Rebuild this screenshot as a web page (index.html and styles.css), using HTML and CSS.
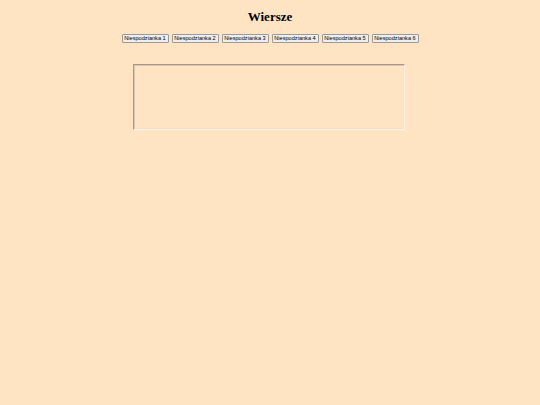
FILE: index.html
```html
<!DOCTYPE html>
<html lang="pl">
<head>
<meta charset="utf-8">
<title>Wiersze</title>
<link rel="stylesheet" href="styles.css">
</head>
<body>
<h3 class="title">Wiersze</h3>
<div class="buttons">
  <button class="btn">Niespodzianka 1</button>
  <button class="btn">Niespodzianka 2</button>
  <button class="btn">Niespodzianka 3</button>
  <button class="btn">Niespodzianka 4</button>
  <button class="btn">Niespodzianka 5</button>
  <button class="btn">Niespodzianka 6</button>
</div>
<div class="frame"></div>
</body>
</html>
```
FILE: styles.css
```css
html, body {
  margin: 0;
  padding: 0;
  background: #ffe4c4;
}
body {
  font-family: "Liberation Serif", serif;
}
.title {
  margin: 0;
  padding-top: 9px;
  font-size: 13px;
  line-height: 15px;
  font-weight: bold;
  text-align: center;
  color: #000;
}
.buttons {
  display: flex;
  justify-content: center;
  gap: 3px;
  margin-top: 10px;
}
.btn {
  font-family: "Liberation Sans", Arial, sans-serif;
  font-size: 5.6px;
  line-height: 7px;
  height: 9px;
  width: 47px;
  padding: 0;
  margin: 0;
  background: #eeeeee;
  color: #000;
  border: 1px solid #9a9a9a;
  border-radius: 1px;
  box-sizing: border-box;
}
.frame {
  width: 272px;
  height: 66px;
  margin: 21px auto 0;
  box-sizing: border-box;
  border-style: solid;
  border-width: 1px;
  border-color: #a89888 #fff2e2 #fff2e2 #a89888;
  box-shadow: inset 1px 1px 0 #d9c6ae, inset -1px -1px 0 #f3e0c8;
  position: relative;
  left: -1px;
}
```
